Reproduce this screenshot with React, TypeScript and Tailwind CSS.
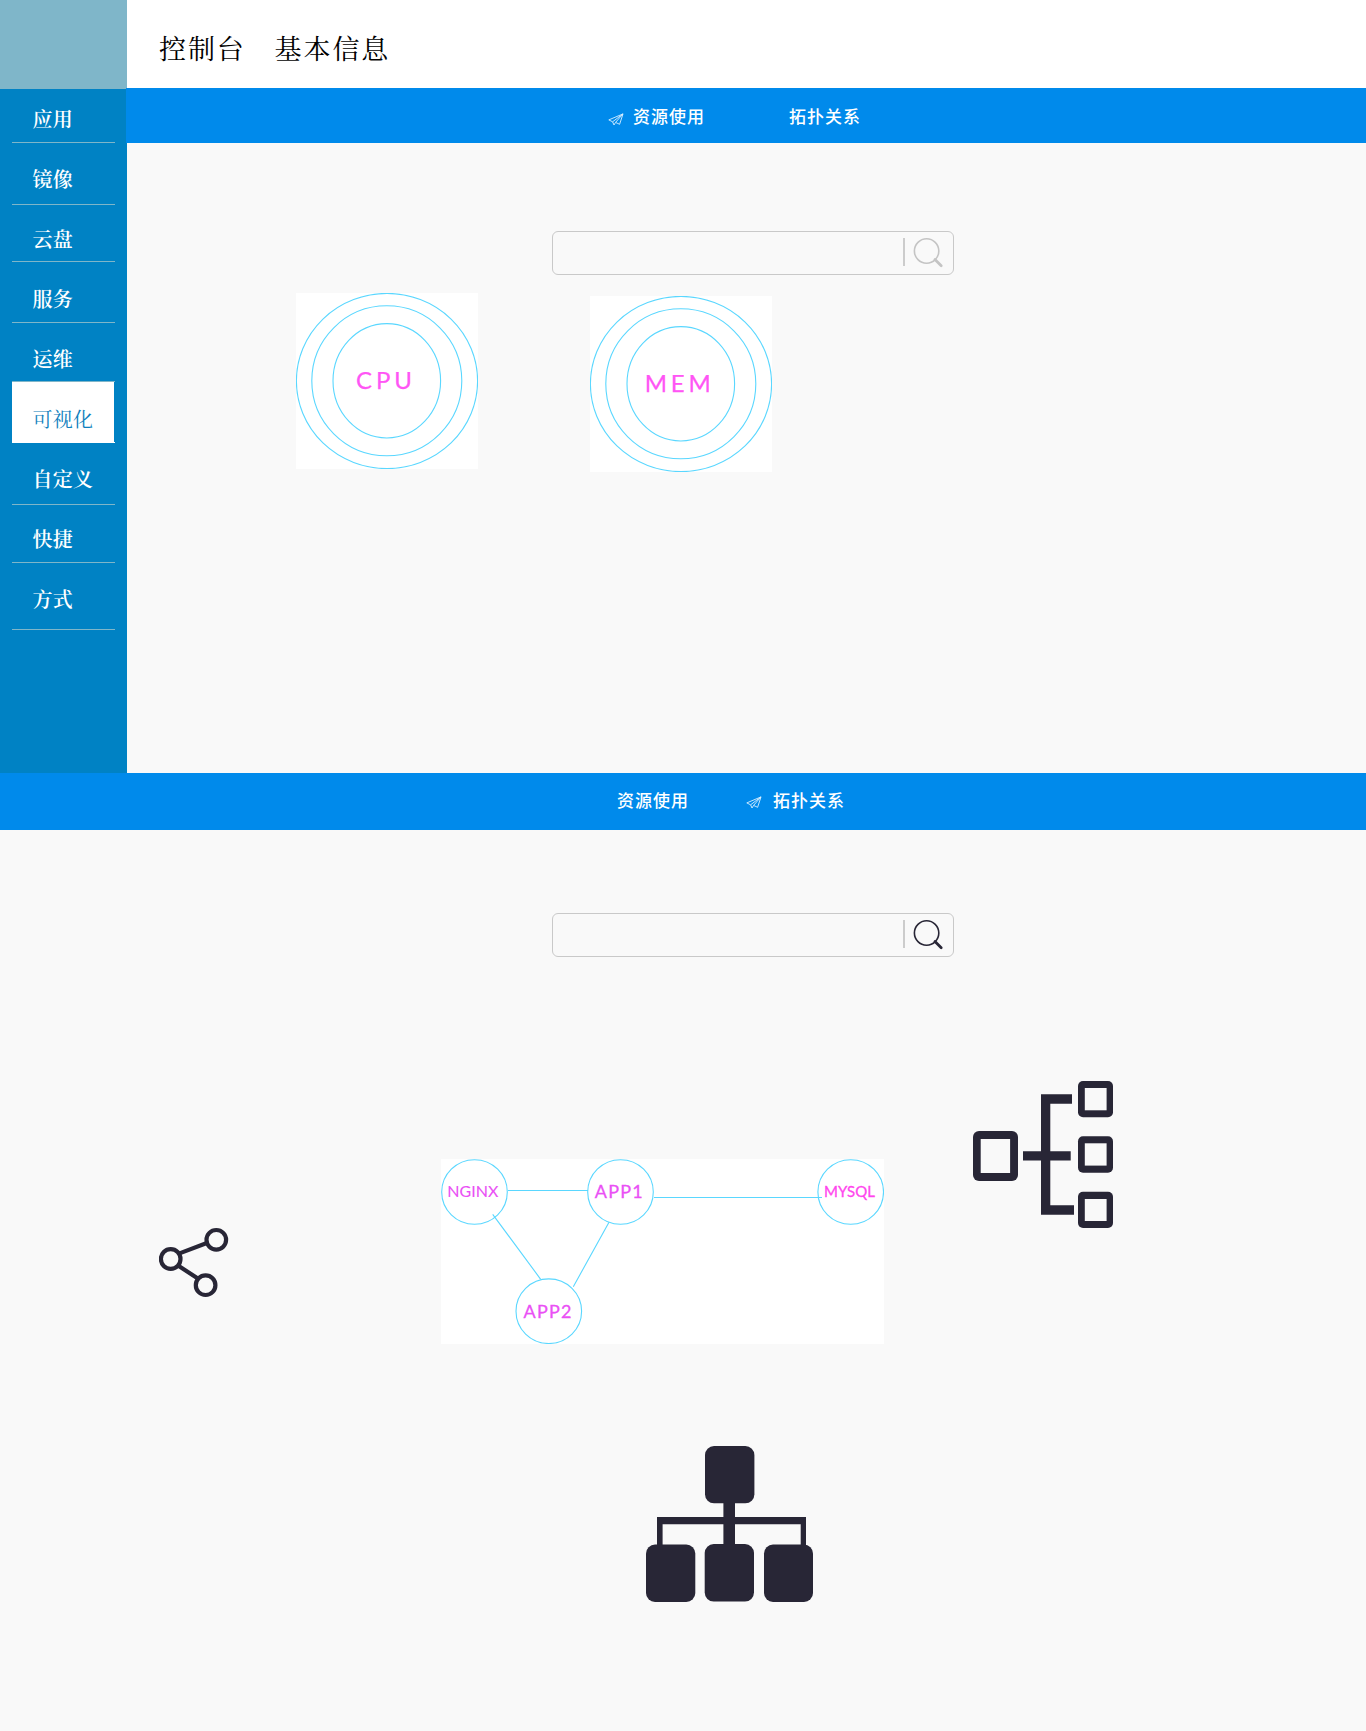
const ink = "#282636";
const cyan = "#5ad7ff";

const menu = [
  { label: "应用", box: "h-[54px] pt-[18px]" },
  { label: "镜像", box: "h-[62px] pt-[24px]" },
  { label: "云盘", box: "h-[57px] pt-[22px]" },
  { label: "服务", box: "h-[61px] pt-[25px]" },
  { label: "运维", box: "h-[59px] pt-[24px]" },
  { label: "可视化", box: "h-[61px] pt-[25px]", active: true },
  { label: "自定义", box: "h-[62px] pt-[24px]" },
  { label: "快捷", box: "h-[58px] pt-[22px]" },
  { label: "方式", box: "h-[67px] pt-[24px]" },
];

function Plane() {
  return (
    <svg
      width="16"
      height="13"
      viewBox="0 0 16 13"
      fill="none"
      stroke="#d9efff"
      strokeWidth="0.9"
      strokeLinejoin="round"
      className="shrink-0"
    >
      <path d="M0.8 6.9 15 0.9 11.6 11.3 7.6 9.4 6 12 4.6 8.8Z" />
      <path d="M4.6 8.8 15 0.9 7.6 9.4" />
    </svg>
  );
}

function Search({ color }: { color: string }) {
  return (
    <div className="flex h-11 w-[402px] items-center rounded-md border border-[#c9c9c9] pr-[9px]">
      <input aria-label="search" className="min-w-0 flex-1 bg-transparent px-3 outline-none" />
      <div className="mb-0.5 h-7 w-0.5 bg-[#cccccc]" />
      <svg width="32" height="32" viewBox="0 0 32 32" fill="none" stroke={color} className="ml-[7px]">
        <circle cx="14.6" cy="14" r="12.2" strokeWidth="1.6" />
        <path d="M23 22.5 29.2 28.7" strokeWidth="2.8" strokeLinecap="round" />
      </svg>
    </div>
  );
}

function Gauge({ label, x, width }: { label: string; x: number; width: number }) {
  return (
    <svg width="182" height="176" viewBox="0 0 182 176" className="bg-white">
      <g fill="none" stroke={cyan} strokeWidth="1.1">
        <ellipse cx="91" cy="88" rx="90.6" ry="87.6" />
        <circle cx="90.8" cy="87.8" r="75" />
        <ellipse cx="90.8" cy="87.8" rx="53.8" ry="57.2" />
      </g>
      <text
        x={x}
        y="96"
        textLength={width}
        fill="#ff55f5"
        stroke="#ff55f5"
        strokeWidth="0.25"
        className="font-['Lato'] text-[24px]"
      >
        {label}
      </text>
    </svg>
  );
}

function Topology() {
  return (
    <svg width="443" height="185" viewBox="0 0 443 185" className="mt-[202px] ml-[212px] shrink-0 bg-white">
      <g fill="none" stroke={cyan} strokeWidth="1.1">
        <ellipse cx="33.5" cy="33" rx="32.8" ry="32.3" />
        <ellipse cx="179.5" cy="33" rx="32.8" ry="32.3" />
        <ellipse cx="409.7" cy="33" rx="32.8" ry="32.3" />
        <ellipse cx="107.8" cy="152.2" rx="32.8" ry="32.3" />
        <path d="M67 31.5H147M213 38.5H381M51.7 55.3 99.7 120.3M168 63.3 132.3 127.7" />
      </g>
      <g className="font-['Lato']" fill="#ea50f5" stroke="#ea50f5" strokeWidth="0.3">
        <text x="6.2" y="38.3" textLength="51.3" className="text-[16px]" strokeWidth="0.1">NGINX</text>
        <text x="153.7" y="39" textLength="48" className="text-[18px]">APP1</text>
        <text x="82.5" y="159" textLength="48" className="text-[18px]">APP2</text>
        <text x="383" y="38" textLength="51" className="text-[15px]" fill="#ff45ee" stroke="#ff45ee">
          MYSQL
        </text>
      </g>
    </svg>
  );
}

function ShareIcon() {
  return (
    <svg
      width="70"
      height="71"
      viewBox="0 0 70 71"
      fill="none"
      stroke={ink}
      strokeWidth="4.2"
      className="mt-[270px] ml-[159px] shrink-0"
    >
      <circle cx="11.7" cy="32" r="9.8" />
      <circle cx="57.3" cy="12.8" r="9.8" />
      <circle cx="46.6" cy="58.2" r="9.8" />
      <path d="M20.5 26.4 48.5 15.8M19 38.5 38.5 51.3" />
    </svg>
  );
}

function TreeIcon() {
  return (
    <svg width="140" height="147" viewBox="0 0 140 147" fill={ink} className="mt-[124px] ml-[89px] shrink-0">
      <rect x="0" y="50" width="45" height="50" rx="6" />
      <rect x="105" y="0" width="35" height="36.3" rx="5" />
      <rect x="105" y="55.2" width="35" height="36.6" rx="5" />
      <rect x="105" y="110.7" width="35" height="36.3" rx="5" />
      <path d="M68 13.2H99V22.7H77.3V70.2H97.7V79.6H77.3V124.2H101V133.8H68V79.6H50V70.2H68Z" />
      <g fill="#f9f9f9">
        <rect x="7.7" y="58" width="29.4" height="34" />
        <rect x="111.8" y="7" width="21.8" height="22.3" />
        <rect x="111.8" y="62.3" width="21.8" height="22.3" />
        <rect x="111.8" y="118" width="21.8" height="22" />
      </g>
    </svg>
  );
}

function OrgIcon() {
  return (
    <svg width="167" height="156" viewBox="0 0 167 156" fill={ink} className="mt-[102px] ml-[646px]">
      <rect x="59" y="0" width="49.4" height="57.3" rx="9" />
      <rect x="0" y="98.6" width="49.3" height="57.4" rx="9" />
      <rect x="58.7" y="98" width="49.3" height="57.6" rx="9" />
      <rect x="118" y="98.6" width="49" height="57.4" rx="9" />
      <path d="M77.4 56H89V71H160V104H154.7V78.3H89V100H77.4V78.3H16.6V104H11V71H77.4Z" />
    </svg>
  );
}

export default function App() {
  return (
    <div className="h-[1731px] w-[1366px] overflow-hidden bg-[#f9f9f9] font-['Noto_Sans_CJK_SC',sans-serif]">
      <div className="flex h-[773px]">
        <aside className="w-[127px] shrink-0 bg-[#0082c4] font-['Noto_Serif_CJK_SC','Noto_Sans_CJK_SC',serif]">
          <div className="h-[89px] bg-[#7fb6c9]" />
          <nav className="px-3">
            {menu.map((m) => (
              <div
                key={m.label}
                className={`${m.box} border-b pl-[20.5px] text-[20px] leading-6 tracking-[0.3px] whitespace-nowrap ${
                  m.active
                    ? "border-white bg-[linear-gradient(#fff,#fff)] bg-[length:102px_100%] bg-no-repeat text-[#0f7fbd]"
                    : "border-[#7fb6c9] font-semibold text-white"
                }`}
              >
                {m.label}
              </div>
            ))}
          </nav>
        </aside>
        <main className="flex-1">
          <header className="h-[88px] bg-white pt-[28px] pl-[32px] font-['Noto_Serif_CJK_SC','Noto_Sans_CJK_SC',serif] text-[27px] leading-10 tracking-[1.9px] whitespace-pre text-black">
            控制台　基本信息
          </header>
          <div className="-ml-px flex h-[55px] items-center bg-[#008aeb] pl-[482px] text-[17px] leading-6 font-medium tracking-[1px] text-white">
            <div className="mt-[7px]">
              <Plane />
            </div>
            <span className="ml-[9px] w-[156px]">资源使用</span>
            <span>拓扑关系</span>
          </div>
          <div className="mt-[88px] ml-[425px]">
            <Search color="#c4c4c4" />
          </div>
          <div className="mt-[18px] ml-[169px] flex gap-[112px]">
            <Gauge label="CPU" x={60} width={56} />
            <div className="mt-[3px]">
              <Gauge label="MEM" x={54.8} width={66} />
            </div>
          </div>
        </main>
      </div>
      <div className="flex h-[57px] items-center bg-[#008aeb] pl-[617px] text-[17px] leading-6 font-medium tracking-[1px] text-white">
        <span className="mb-[3px] w-[129px]">资源使用</span>
        <div className="mt-[2px]">
          <Plane />
        </div>
        <span className="mb-[3px] ml-[11px]">拓扑关系</span>
      </div>
      <div className="mt-[83px] ml-[552px]">
        <Search color={ink} />
      </div>
      <div className="flex items-start">
        <ShareIcon />
        <Topology />
        <TreeIcon />
      </div>
      <OrgIcon />
    </div>
  );
}
